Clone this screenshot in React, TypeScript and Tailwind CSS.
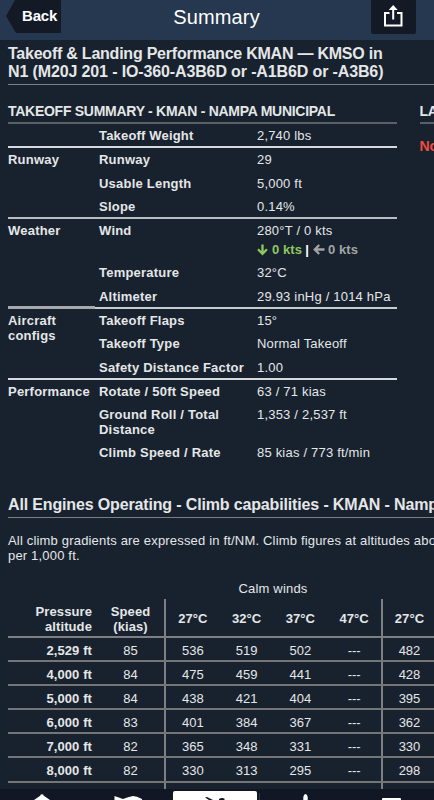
import { ReactNode } from "react";

type Row = { label: string; value: ReactNode; height: string };

const RUNWAY: Row[] = [
  { label: "Runway", value: "29", height: "h-[24px]" },
  { label: "Usable Length", value: "5,000 ft", height: "h-[23px]" },
  { label: "Slope", value: "0.14%", height: "h-[22px]" },
];

const WEATHER: Row[] = [
  { label: "Wind", value: <Wind />, height: "h-[42px]" },
  { label: "Temperature", value: "32°C", height: "h-[24px]" },
  { label: "Altimeter", value: "29.93 inHg / 1014 hPa", height: "h-[22px]" },
];

const CONFIGS: Row[] = [
  { label: "Takeoff Flaps", value: "15°", height: "h-[23px]" },
  { label: "Takeoff Type", value: "Normal Takeoff", height: "h-[24px]" },
  { label: "Safety Distance Factor", value: "1.00", height: "h-[22px]" },
];

const PERFORMANCE: Row[] = [
  { label: "Rotate / 50ft Speed", value: "63 / 71 kias", height: "h-[23px]" },
  { label: "Ground Roll / Total Distance", value: "1,353 / 2,537 ft", height: "h-[38px]" },
  { label: "Climb Speed / Rate", value: "85 kias / 773 ft/min", height: "h-[23px]" },
];

const CLIMB = [
  ["2,529 ft", "85", "536", "519", "502", "---", "482"],
  ["4,000 ft", "84", "475", "459", "441", "---", "428"],
  ["5,000 ft", "84", "438", "421", "404", "---", "395"],
  ["6,000 ft", "83", "401", "384", "367", "---", "362"],
  ["7,000 ft", "82", "365", "348", "331", "---", "330"],
  ["8,000 ft", "82", "330", "313", "295", "---", "298"],
];

const TEMPS = ["27°C", "32°C", "37°C", "47°C"];

function Wind() {
  return (
    <>
      <div>280°T / 0 kts</div>
      <div className="mt-[4px] flex h-[15px] items-center font-bold tracking-[0.1px]">
        <svg width="11" height="12" viewBox="0 0 11 12" fill="none" stroke="#8fc760" strokeWidth="2.3">
          <path d="M5.5 0.5V10M1 5.3L5.5 9.8L10 5.3" />
        </svg>
        <span className="ml-[4px] text-[#8fc760]">0 kts</span>
        <span className="ml-[3px] text-white">|</span>
        <svg className="ml-[4px]" width="12" height="11" viewBox="0 0 12 11" fill="none" stroke="#a3a5a5" strokeWidth="2.3">
          <path d="M11.5 5.5H2M6.2 1L1.8 5.5L6.2 10" />
        </svg>
        <span className="ml-[3px] text-[#a3a5a5]">0 kts</span>
      </div>
    </>
  );
}

function Group({ title, rows, border }: { title: string; rows: Row[]; border: string }) {
  return (
    <div className={`flex ${border}`}>
      <div className="w-[91px] shrink-0 pt-[4px] font-bold tracking-[0.22px]">
        <div className="w-[86px]">{title}</div>
      </div>
      <div className="grow">
        {rows.map((row) => (
          <div key={row.label} className={`flex pt-[4px] ${row.height}`}>
            <div className="w-[158px] shrink-0 pr-2 font-bold tracking-[0.22px]">{row.label}</div>
            <div className="whitespace-nowrap tracking-[0.2px]">{row.value}</div>
          </div>
        ))}
      </div>
    </div>
  );
}

function Header() {
  return (
    <header className="flex h-[40px] shrink-0 items-start justify-between bg-[#26384f] text-white">
      <div className="relative ml-[6px] h-[33px] w-[55px]">
        <svg className="absolute inset-0" width="55" height="33" viewBox="0 0 55 33">
          <path d="M9 0H54Q55 0 55 1V32Q55 33 54 33H10L0 16Z" fill="#131a26" />
        </svg>
        <span className="absolute left-[16px] top-[6px] text-[15px] leading-[20px] font-bold tracking-[-0.2px]">Back</span>
      </div>
      <h1 className="pt-[4px] pl-px text-[20px] leading-[26px] tracking-[0.15px]">Summary</h1>
      <div className="mr-[18px] flex h-[34px] w-[45px] justify-center rounded-b-[2px] bg-[#131a26] pt-[5px]">
        <svg className="mr-px" width="20" height="22" viewBox="0 0 20 22" fill="none" stroke="white" strokeWidth="2">
          <path d="M6.5 8H2V20.5H18.5V8H14M10.2 14.5V3" />
          <path d="M5.7 5L10.2 0L14.7 5Z" fill="white" stroke="none" />
        </svg>
      </div>
    </header>
  );
}

function ClimbTable() {
  return (
    <div className="w-[429px]">
      <div className="flex h-[18px] leading-[15px]">
        <div className="ml-[156px] w-[218px] text-center tracking-[0.18px]">Calm winds</div>
      </div>
      <div className="flex h-[39px] border-b-2 border-[#7d7f80] text-center font-bold leading-[15px] tracking-[0.1px]">
        <div className="w-[84px] pt-[5px] text-right">Pressure<br />altitude</div>
        <div className="w-[72px] pt-[5px] pl-[5px]">Speed<br />(kias)</div>
        <div className="flex w-[217px] items-center border-l-2 border-[#7d7f80] pt-[2px]">
          {TEMPS.map((t) => (
            <div key={t} className="w-[54px]">{t}</div>
          ))}
        </div>
        <div className="flex w-[55px] items-center justify-center border-l-2 border-[#7d7f80] pt-[2px]">27°C</div>
      </div>
      {CLIMB.map(([altitude, speed, ...rates]) => (
        <div key={altitude} className="flex h-[24.1px] border-b-2 border-[#737577] text-center leading-[25px]">
          <div className="w-[84px] text-right font-bold tracking-[0.1px]">{altitude}</div>
          <div className="w-[72px] pl-[5px]">{speed}</div>
          <div className="flex w-[217px] border-l-2 border-[#7d7f80]">
            {rates.slice(0, 4).map((rate, i) => (
              <div key={i} className="w-[54px]">{rate}</div>
            ))}
          </div>
          <div className="w-[55px] border-l-2 border-[#7d7f80]">{rates[4]}</div>
        </div>
      ))}
      <div className="flex h-[20px]">
        <div className="ml-[156px] w-[217px] border-l-2 border-[#7d7f80]" />
        <div className="border-l-2 border-[#7d7f80]" />
      </div>
    </div>
  );
}

function TabBar() {
  return (
    <nav className="flex h-[11px] shrink-0 items-end bg-[#111724]">
      <svg className="ml-[34px]" width="16" height="6" viewBox="0 0 16 6" fill="white">
        <path d="M0 6L4 3.2L6.5 1.6V0.8Q8 -0.4 9.5 0.8V1.6L12 3.2L16 6Z" />
      </svg>
      <svg className="ml-[64px]" width="28" height="4" viewBox="0 0 28 4" fill="white">
        <path d="M0.5 0L9 3L14 1.2L19 0L23 0.8L28 3V4H0.5Z" />
      </svg>
      <div className="ml-[31px] flex h-[9px] w-[84px] items-end justify-center rounded-t-[2px] bg-white">
        <svg width="22" height="3" viewBox="0 0 22 3" fill="#111724">
          <path d="M1 0.5L3 0L9 3H5ZM15 2Q18 0 21 2L20 3H15Z" />
        </svg>
      </div>
      <div className="ml-[2px] h-[7px] w-px bg-[#2d333f]" />
      <svg className="ml-[43px]" width="5" height="6" viewBox="0 0 5 6" fill="white">
        <path d="M0.3 6V3Q1 0 2.5 0Q4 0 4.7 3V6Z" />
      </svg>
      <div className="ml-[74px] h-[2px] w-[19px] rounded-t-[1px] bg-white" />
    </nav>
  );
}

export default function App() {
  return (
    <main className="flex h-[800px] w-[434px] flex-col overflow-hidden bg-[#18222e] font-['Liberation_Sans',Arial,sans-serif] text-[13px] leading-[15px] text-[#e4e6e8]">
      <Header />
      <div className="min-h-0 grow overflow-hidden pl-[8px]">
        <h2 className="h-[45px] border-b border-[#7b7f83] pt-[5px] text-[16px] leading-[18px] font-bold whitespace-nowrap">
          <div className="tracking-[-0.23px]">Takeoff &amp; Landing Performance KMAN — KMSO in</div>
          <div className="tracking-[-0.13px]">N1 (M20J 201 - IO-360-A3B6D or -A1B6D or -A3B6)</div>
        </h2>

        <div className="mt-[19px] flex h-[388px] gap-[22.5px]">
          <section className="w-[389px] shrink-0">
            <h3 className="h-[20px] border-b-2 border-[#596066] text-[14px] leading-[15px] font-bold tracking-[-0.27px] whitespace-nowrap">
              TAKEOFF SUMMARY - KMAN - NAMPA MUNICIPAL
            </h3>
            <div className="flex h-[24px] border-b-2 border-[#d6d9db] pt-[4px]">
              <div className="ml-[91px] w-[158px] font-bold tracking-[0.18px]">Takeoff Weight</div>
              <div className="tracking-[0.18px]">2,740 lbs</div>
            </div>
            <Group title="Runway" rows={RUNWAY} border="border-b-2 border-[#b9bcc0]" />
            <Group title="Weather" rows={WEATHER} border="" />
            <div className="flex h-[2px] items-end">
              <div className="-mt-px h-[3px] w-[87px] bg-[#a6a8ab]" />
              <div className="h-[2px] grow bg-[#c9ccce]" />
            </div>
            <Group title="Aircraft configs" rows={CONFIGS} border="border-b-2 border-[#d6d9db]" />
            <Group title="Performance" rows={PERFORMANCE} border="" />
          </section>
          <section className="w-[200px] shrink-0">
            <h3 className="h-[20px] border-b-2 border-[#596066] text-[14px] leading-[15px] font-bold tracking-[-0.27px] whitespace-nowrap">
              LANDING SUMMARY
            </h3>
            <p className="pt-[15px] text-[14px] font-bold text-[#f04a41]">No landing data</p>
          </section>
        </div>

        <section className="w-[600px]">
          <h2 className="h-[26px] border-b border-[#7d7f80] pt-[4px] text-[16px] leading-[18px] font-bold tracking-[-0.15px] whitespace-nowrap">
            All Engines Operating - Climb capabilities - KMAN - Nampa Municipal
          </h2>
          <p className="mt-[15px] h-[48px] tracking-[0.18px] whitespace-nowrap">
            All climb gradients are expressed in ft/NM. Climb figures at altitudes above
            <br />
            per 1,000 ft.
          </p>
          <ClimbTable />
        </section>
      </div>
      <TabBar />
    </main>
  );
}
